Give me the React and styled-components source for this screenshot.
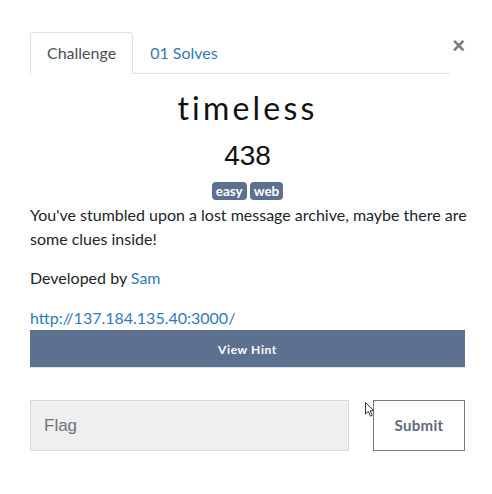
import React from "react";
import styled, { createGlobalStyle } from "styled-components";

const Global = createGlobalStyle`
  html, body { margin: 0; padding: 0; background: #fff; }
  body { font-family: Lato, "Open Sans", sans-serif; color: #212529; }
`;

const Page = styled.div`
  position: relative;
  width: 492px;
  height: 494px;
  box-sizing: border-box;
  padding: 32px 27px 0 30px;
`;

const Header = styled.div`
  display: flex;
  align-items: flex-start;
`;

const Tabs = styled.div`
  flex: 1;
  display: flex;
  border-bottom: 1px solid #dee2e6;
  margin-right: 2px;
`;

const Tab = styled.div`
  display: flex;
  align-items: center;
  padding: 0 16px 2px;
  font-size: 16px;
  box-sizing: border-box;
  height: 42px;
  margin-bottom: -1px;
  border: 1px solid ${(p) => (p.$active ? "#dee2e6" : "transparent")};
  border-bottom-color: ${(p) => (p.$active ? "#fff" : "transparent")};
  border-radius: 4px 4px 0 0;
  color: ${(p) => (p.$active ? "#495057" : "#337ab7")};
  background: ${(p) => (p.$active ? "#fff" : "transparent")};
`;

const Close = styled.div`
  font-family: "Liberation Sans", Arial, sans-serif;
  font-size: 22px;
  font-weight: 700;
  line-height: 1;
  color: #7a7a7a;
  margin-top: 3px;
`;

const Body = styled.div`
  width: 435px;
`;

const Title = styled.h2`
  margin: 15px 0 0;
  text-align: center;
  font-family: Lato, sans-serif;
  font-weight: 400;
  font-size: 32px;
  line-height: 38px;
  letter-spacing: 3.2px;
  color: #111;
`;

const Points = styled.div`
  margin-top: 12px;
  text-align: center;
  font-family: "Liberation Sans", Arial, sans-serif;
  font-size: 28px;
  line-height: 33px;
  color: #111;
`;

const Tags = styled.div`
  margin-top: 10px;
  display: flex;
  justify-content: center;
  gap: 3px;
`;

const Tag = styled.span`
  display: inline-flex;
  align-items: center;
  height: 17px;
  padding: 0 4px 1px;
  border-radius: 4px;
  background: #5c7190;
  color: #fff;
  font-size: 13.5px;
  font-weight: 700;
`;

const Para = styled.p`
  margin: ${(p) => p.$top || 0}px 0 0;
  width: 440px;
  font-size: 16px;
  line-height: 24px;
  color: #212529;
`;

const Link = styled.a`
  color: #337ab7;
  text-decoration: none;
`;

const HintButton = styled.div`
  height: 38px;
  background: #5c7190;
  color: #fff;
  display: flex;
  align-items: center;
  justify-content: center;
  font-size: 12px;
  font-weight: 700;
  letter-spacing: 0.6px;
  border-bottom: 1px solid #dfe3e8;
  box-sizing: border-box;
  padding-top: 2px;
`;

const FlagRow = styled.div`
  margin-top: 32px;
  display: flex;
  gap: 24px;
`;

const FlagInput = styled.div`
  width: 319px;
  height: 51px;
  box-sizing: border-box;
  background: #efefef;
  border: 1px solid #d6d9dd;
  display: flex;
  align-items: center;
  padding-left: 13px;
  font-family: "Liberation Sans", Arial, sans-serif;
  font-size: 17px;
  color: #6c757d;
`;

const Submit = styled.div`
  width: 92px;
  height: 51px;
  box-sizing: border-box;
  border: 1px solid #6c7a89;
  display: flex;
  align-items: center;
  justify-content: center;
  padding-bottom: 2px;
  font-size: 15px;
  font-weight: 700;
  color: #5b6b7b;
  letter-spacing: 0.3px;
`;

const Cursor = styled.svg`
  position: absolute;
  left: 365px;
  top: 402px;
`;

export default function App() {
  return (
    <Page>
      <Global />
      <Header>
        <Tabs>
          <Tab $active>Challenge</Tab>
          <Tab>01 Solves</Tab>
        </Tabs>
        <Close>×</Close>
      </Header>
      <Body>
        <Title>timeless</Title>
        <Points>438</Points>
        <Tags>
          <Tag>easy</Tag>
          <Tag>web</Tag>
        </Tags>
        <Para $top={3}>
          You've stumbled upon a lost message archive, maybe there are some clues inside!
        </Para>
        <Para $top={15}>
          Developed by <Link>Sam</Link>
        </Para>
        <Para $top={16}>
          <Link>http://137.184.135.40:3000/</Link>
        </Para>
        <HintButton>View Hint</HintButton>
        <FlagRow>
          <FlagInput>Flag</FlagInput>
          <Submit>Submit</Submit>
        </FlagRow>
      </Body>
      <Cursor width="11" height="16" viewBox="0 0 11 16">
        <path d="M0.5 0.5 L0.5 12 L3.3 9.4 L5.4 14.2 L7.2 13.4 L5.2 8.8 L9 8.8 Z" fill="#fff" stroke="#333" strokeWidth="1" />
      </Cursor>
    </Page>
  );
}
